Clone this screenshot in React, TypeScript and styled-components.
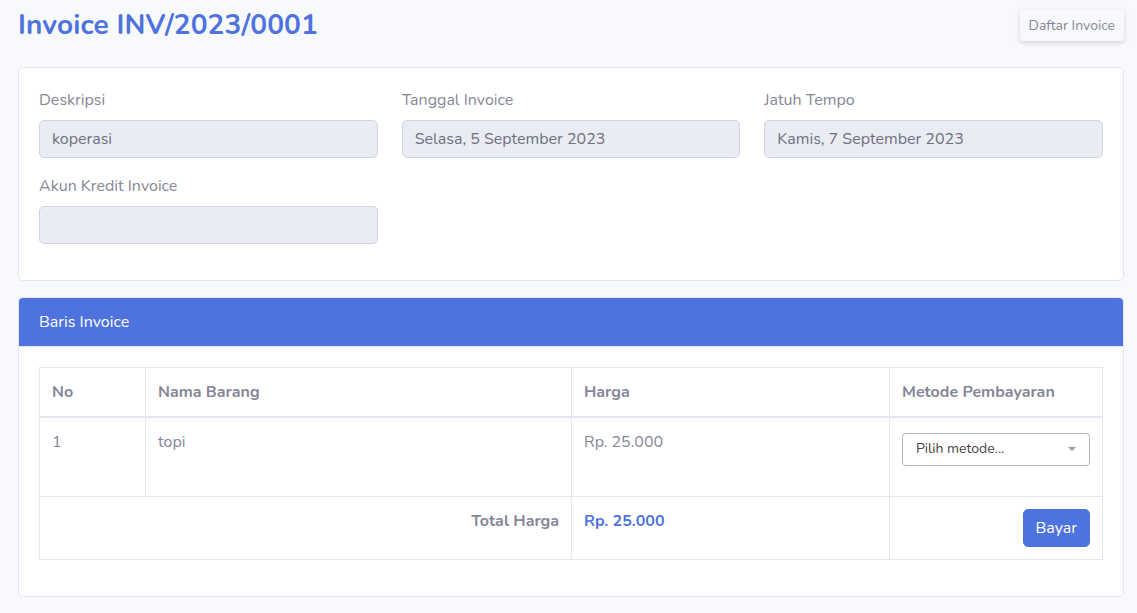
import React from "react";
import styled, { createGlobalStyle } from "styled-components";

const GlobalStyle = createGlobalStyle`
  html, body { margin: 0; padding: 0; }
  body {
    background: #f8f9fc;
    font-family: "Nunito", "Lato", "Noto Sans", sans-serif;
    color: #858796;
    font-size: 16px;
    line-height: 1.5;
  }
  * { box-sizing: border-box; }
`;

const Page = styled.div`
  padding: 0 13px 0 18px;
`;

const TitleBar = styled.div`
  display: flex;
  justify-content: space-between;
  align-items: flex-start;
  padding-top: 9px;
  margin-bottom: 24px;
`;

const Title = styled.h1`
  margin: 0;
  font-size: 28px;
  font-weight: 700;
  line-height: 1.2;
  color: #4e73df;
  letter-spacing: 0.1px;
`;

const SmallButton = styled.button`
  margin-top: 1px;
  padding: 4px 8px;
  font-family: inherit;
  font-size: 14px;
  line-height: 21px;
  color: #858796;
  background: #f8f9fc;
  border: 1px solid #f8f9fc;
  border-radius: 3px;
  box-shadow: 0 2px 5px rgba(58, 59, 69, 0.2);
`;

const Card = styled.div`
  background: #fff;
  border: 1px solid #e3e6f0;
  border-radius: 5px;
  margin-bottom: 16px;
  overflow: hidden;
`;

const CardHeader = styled.div`
  background: #4e73df;
  color: #fff;
  padding: 12px 20px;
  line-height: 24px;
  border-bottom: 1px solid #e3e6f0;
`;

const CardBody = styled.div`
  padding: 20px;
`;

const FormGrid = styled.div`
  display: grid;
  grid-template-columns: repeat(3, 1fr);
  column-gap: 24px;
`;

const FormGroup = styled.div`
  margin-bottom: 16px;
`;

const Label = styled.div`
  line-height: 24px;
  margin-bottom: 8px;
`;

const Input = styled.div`
  height: 38px;
  padding: 6px 12px;
  line-height: 24px;
  background: #eaecf4;
  border: 1px solid #d1d3e2;
  border-radius: 5px;
  color: #6e707e;
`;

const Table = styled.table`
  width: 100%;
  border-collapse: collapse;
  margin-bottom: 16px;
  color: #858796;
`;

const Th = styled.th<{ $w?: string }>`
  text-align: left;
  font-weight: 700;
  padding: 12px;
  border: 1px solid #e3e6f0;
  border-bottom-width: 2px;
  line-height: 24px;
  width: ${(p) => p.$w || "auto"};
`;

const Td = styled.td<{ $right?: boolean; $h?: number; $bold?: boolean; $accent?: boolean }>`
  vertical-align: top;
  padding: 12px;
  border: 1px solid #e3e6f0;
  line-height: 24px;
  text-align: ${(p) => (p.$right ? "right" : "left")};
  height: ${(p) => (p.$h ? `${p.$h}px` : "auto")};
  font-weight: ${(p) => (p.$bold ? 700 : 400)};
  color: ${(p) => (p.$accent ? "#4e73df" : "inherit")};
`;

const Select = styled.div`
  margin-top: 3px;
  height: 33px;
  display: flex;
  align-items: center;
  justify-content: space-between;
  padding: 0 13px 0 13px;
  border: 1px solid #b5b5b5;
  border-radius: 4px;
  font-size: 14px;
  color: #444;
`;

const Caret = styled.span`
  width: 0;
  height: 0;
  border-left: 4px solid transparent;
  border-right: 4px solid transparent;
  border-top: 4px solid #999;
`;

const PrimaryButton = styled.button`
  padding: 6px 12px;
  font-family: inherit;
  font-size: 16px;
  line-height: 24px;
  color: #fff;
  background: #4e73df;
  border: 1px solid #4e73df;
  border-radius: 5px;
`;

const ButtonCell = styled.div`
  display: flex;
  justify-content: flex-end;
`;

export default function App() {
  return (
    <>
      <GlobalStyle />
      <Page>
        <TitleBar>
          <Title>Invoice INV/2023/0001</Title>
          <SmallButton>Daftar Invoice</SmallButton>
        </TitleBar>

        <Card>
          <CardBody>
            <FormGrid>
              <FormGroup>
                <Label>Deskripsi</Label>
                <Input>koperasi</Input>
              </FormGroup>
              <FormGroup>
                <Label>Tanggal Invoice</Label>
                <Input>Selasa, 5 September 2023</Input>
              </FormGroup>
              <FormGroup>
                <Label>Jatuh Tempo</Label>
                <Input>Kamis, 7 September 2023</Input>
              </FormGroup>
              <FormGroup>
                <Label>Akun Kredit Invoice</Label>
                <Input />
              </FormGroup>
            </FormGrid>
          </CardBody>
        </Card>

        <Card>
          <CardHeader>Baris Invoice</CardHeader>
          <CardBody>
            <Table>
              <thead>
                <tr>
                  <Th $w="106px">No</Th>
                  <Th $w="426px">Nama Barang</Th>
                  <Th $w="318px">Harga</Th>
                  <Th>Metode Pembayaran</Th>
                </tr>
              </thead>
              <tbody>
                <tr>
                  <Td $h={80}>1</Td>
                  <Td>topi</Td>
                  <Td>Rp. 25.000</Td>
                  <Td>
                    <Select>
                      <span>Pilih metode...</span>
                      <Caret />
                    </Select>
                  </Td>
                </tr>
                <tr>
                  <Td colSpan={2} $right $h={63} $bold>
                    Total Harga
                  </Td>
                  <Td $bold $accent>
                    Rp. 25.000
                  </Td>
                  <Td>
                    <ButtonCell>
                      <PrimaryButton>Bayar</PrimaryButton>
                    </ButtonCell>
                  </Td>
                </tr>
              </tbody>
            </Table>
          </CardBody>
        </Card>
      </Page>
    </>
  );
}
